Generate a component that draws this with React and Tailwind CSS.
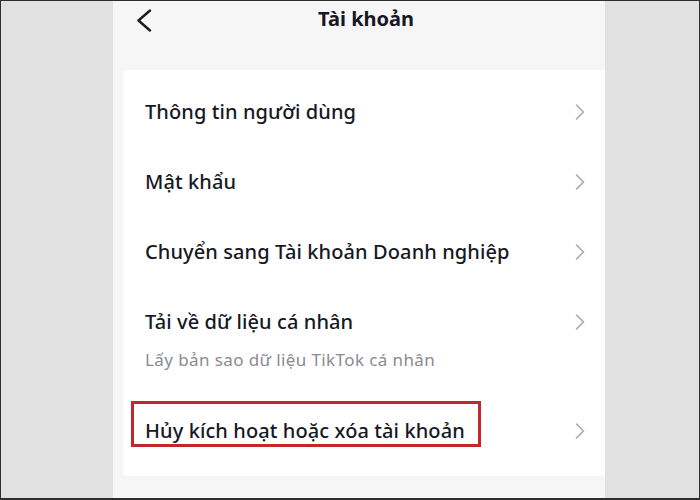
function Chevron() {
  return (
    <svg width="10" height="16" viewBox="0 0 10 16" fill="none">
      <polyline points="1.5,1 8.5,8 1.5,15" stroke="#a9a9ab" strokeWidth="1.6" strokeLinecap="round" strokeLinejoin="round" />
    </svg>
  );
}

const rows = [
  { title: "Thông tin người dùng" },
  { title: "Mật khẩu" },
  { title: "Chuyển sang Tài khoản Doanh nghiệp" },
  { title: "Tải về dữ liệu cá nhân", sub: "Lấy bản sao dữ liệu TikTok cá nhân" },
];

function App() {
  return (
    <div
      className="w-[700px] h-[500px] flex border-t border-l border-r border-b-2 border-[#2e2e2e] bg-[#e1e1e1] overflow-hidden"
      style={{ fontFamily: '"Noto Sans", "Open Sans", sans-serif' }}
    >
      <div className="w-[112px]" />
      <div className="w-[492px] bg-[#f6f6f6] flex flex-col">
        <div className="h-[69px] relative flex justify-center">
          <svg className="absolute left-[23px] top-[8px]" width="16" height="23" viewBox="0 0 16 23" fill="none">
            <polyline points="14,1.5 2.5,11.5 14,21.5" stroke="#1b1b1f" strokeWidth="2.4" strokeLinecap="round" strokeLinejoin="round" />
          </svg>
          <h1 className="mt-[3px] ml-[14px] text-[20px] leading-[30px] font-bold text-[#161823]">Tài khoản</h1>
        </div>
        <div className="ml-[10px] bg-white rounded-tl-[4px] rounded-bl-[4px] h-[406px] pt-[7px] flex flex-col">
          {rows.map((r) => (
            <div key={r.title} className="flex flex-col">
              <div className="h-[70px] flex items-center justify-between pl-[22px] pr-[20px]">
                <span className="text-[20px] font-medium text-[#161823] tracking-[0.1px]">{r.title}</span>
                <Chevron />
              </div>
              {r.sub && (
                <div className="-mt-[9px] mb-[24px] pl-[22px] text-[17px] leading-[24px] tracking-[0.4px] text-[#8a8b91]">{r.sub}</div>
              )}
            </div>
          ))}
          <div className="relative h-[70px] flex items-center justify-between pl-[22px] pr-[20px]">
            <span className="text-[20px] font-medium text-[#161823] tracking-[0.1px]">Hủy kích hoạt hoặc xóa tài khoản</span>
            <Chevron />
            <div className="absolute left-[8px] top-[5px] w-[350px] h-[46px] border-[3px] border-[#c1272d]" />
          </div>
        </div>
      </div>
      <div className="flex-1" />
    </div>
  );
}

export default App;
